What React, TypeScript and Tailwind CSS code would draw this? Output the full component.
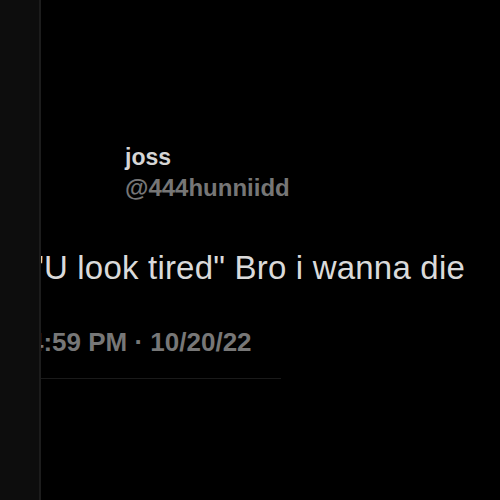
const App = () => {
  return (
    <div
      className="flex h-[500px] w-[500px] overflow-hidden bg-black"
      style={{ fontFamily: '"Liberation Sans", Arial, sans-serif' }}
    >
      {/* left panel edge */}
      <div className="w-[41px] shrink-0 border-r-2 border-[#1c1c1c] bg-[#0d0d0d]" />

      {/* tweet */}
      <div className="flex-1 overflow-hidden">
        <div className="pt-[146px] pl-[84px]">
          <p className="text-[23px] font-bold leading-none text-[#d6d6d6]">joss</p>
          <p className="mt-[7px] text-[24px] font-bold leading-none text-[#767676]">@444hunniidd</p>
        </div>

        <p className="mt-[51px] -ml-[9px] whitespace-nowrap text-[33px] leading-none tracking-[0.2px] text-[#dadada]">
          "U look tired" Bro i wanna die
        </p>

        <p className="mt-[45px] -ml-[12px] whitespace-nowrap text-[26px] font-bold leading-none text-[#777777]">
          4:59 PM · 10/20/22
        </p>

        <div className="mt-[23px] h-px w-[240px] bg-[#1a1a1a]" />
      </div>
    </div>
  );
};

export default App;
